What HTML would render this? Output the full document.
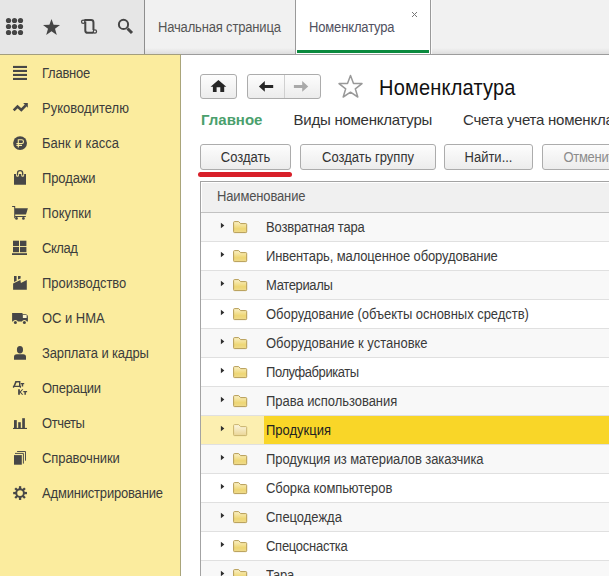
<!DOCTYPE html>
<html><head><meta charset="utf-8">
<style>
*{margin:0;padding:0;box-sizing:border-box}
html,body{width:609px;height:576px;overflow:hidden;background:#fff;font-family:"Liberation Sans",sans-serif;color:#4d4d4d}

.abs{position:absolute}
#top{position:absolute;left:0;top:0;width:609px;height:55px;background:#e6e6e6}
#tabs{position:absolute;left:144px;top:0;width:465px;height:54px;background:linear-gradient(#f1f1f1 0,#f1f1f1 48px,#dedede 54px);border-left:1px solid #8e8e8e}
#topline{position:absolute;left:0;top:54px;width:609px;height:1px;background:#9c9c9c}#topline2{position:absolute;left:0;top:54px;width:181px;height:1px;background:#a39e7e}
.tab{position:absolute;top:0;height:54px;font-size:13px;white-space:nowrap}
#side{position:absolute;left:0;top:55px;width:181px;height:521px;background:#fbec9e;border-right:1px solid #aaa57a}
.si{position:absolute;left:42px;font-size:13px;color:#3c3c3c;white-space:nowrap;letter-spacing:0px;transform:scaleY(1.06);transform-origin:0 12px}
.ic{position:absolute;left:0;top:0}
.bt{display:inline-block;transform:scaleY(1.07);transform-origin:0 17.5px}
.ts{transform:scaleY(1.07);transform-origin:0 12px}
.btn{position:absolute;height:26px;border:1px solid #acacac;border-radius:3px;background:linear-gradient(#fdfdfd,#ececec);font-size:13px;color:#333;text-align:center;line-height:25.4px;white-space:nowrap}
#table{position:absolute;left:200px;top:181px;width:420px;height:400px;border:1px solid #a3a3a3;border-right:none}
.hdr{position:absolute;left:0;top:0;width:100%;height:31px;background:#f0f0f0;border-bottom:1px solid #c2c2c2;box-shadow:inset 1px 1px 0 #fff}
.row{position:absolute;left:0;width:100%;height:29px;border-bottom:1px solid #e0e0e0;font-size:13px;color:#333;white-space:nowrap}
.row .t{position:absolute;left:65px;top:7px;letter-spacing:0px;color:#3a3a3a;transform:scaleY(1.06);transform-origin:0 12px}
.tri{position:absolute;left:19px;top:9px}
.fold{position:absolute;left:31.8px;top:7.7px}
</style></head><body>
<svg width="0" height="0" style="position:absolute"><defs>
<linearGradient id="fg" x1="0" y1="0" x2="0" y2="1"><stop offset="0" stop-color="#fbf1c6"/><stop offset="0.65" stop-color="#eed674"/><stop offset="1" stop-color="#efdb8e"/></linearGradient>
<linearGradient id="fh" x1="0" y1="0" x2="0" y2="1"><stop offset="0" stop-color="#fdf7df"/><stop offset="1" stop-color="#ead596"/></linearGradient>
</defs></svg>
<div id="top"></div>
<div id="tabs">
  <div class="tab" style="left:0;width:151px;"><span class="abs ts" style="left:13px;top:19.9px;color:#555;letter-spacing:-0.17px">Начальная страница</span></div>
  <div class="tab" style="left:150px;width:136px;background:#fff;border-left:1px solid #9a9a9a;border-right:1px solid #9a9a9a"><span class="abs ts" style="left:13px;top:19.9px;color:#505060;letter-spacing:-0.15px">Номенклатура</span>
    <div class="abs" style="left:1px;top:50px;width:132px;height:3px;background:#0a8a3e"></div>
    <svg class="abs" style="left:115px;top:11px" width="7" height="7" viewBox="0 0 7 7"><path d="M1 1L6 6M6 1L1 6" stroke="#777" stroke-width="1"/></svg>
  </div>
</div>
<div id="topline"></div><div id="topline2"></div><div class="abs" style="left:431px;top:0;width:1px;height:54px;background:#fafafa"></div>

<!-- top icons -->
<svg class="abs" style="left:0;top:0" width="144" height="54">
  <g fill="#454545">
    <circle cx="8.5" cy="20.5" r="2.6"/><circle cx="14.5" cy="20.5" r="2.6"/><circle cx="20.5" cy="20.5" r="2.6"/>
    <circle cx="8.5" cy="26.5" r="2.6"/><circle cx="14.5" cy="26.5" r="2.6"/><circle cx="20.5" cy="26.5" r="2.6"/>
    <circle cx="8.5" cy="32.5" r="2.6"/><circle cx="14.5" cy="32.5" r="2.6"/><circle cx="20.5" cy="32.5" r="2.6"/>
    <path d="M51.5 19 L53.6 24.8 L60 24.9 L55 28.7 L56.8 35 L51.5 31.3 L46.2 35 L48 28.7 L43 24.9 L49.4 24.8Z"/>
  </g>
  <g fill="none" stroke="#454545" stroke-width="2">
    <path d="M84.3 20 H91 A2.45 2.45 0 0 1 93.45 22.45 V30"/>
    <path d="M85.3 21.6 V30.4 A2.45 2.45 0 0 0 87.75 32.85 H93.5"/>
    <circle cx="123.5" cy="24.4" r="4.6"/>
    <path d="M127.5 28.5 L132 33" stroke-width="3"/>
  </g>
  <circle cx="83.2" cy="21.7" r="1.65" fill="#eeeeee" stroke="#454545" stroke-width="1.25"/>
  <circle cx="94.9" cy="31.5" r="1.65" fill="#eeeeee" stroke="#454545" stroke-width="1.25"/>
</svg>

<div id="side">
  <div class="si" style="top:11.1px;letter-spacing:-0.250px">Главное</div>
  <div class="si" style="top:46.1px;letter-spacing:0.020px">Руководителю</div>
  <div class="si" style="top:81.1px;letter-spacing:0.050px">Банк и касса</div>
  <div class="si" style="top:116.1px;letter-spacing:-0.117px">Продажи</div>
  <div class="si" style="top:151.1px;letter-spacing:0.060px">Покупки</div>
  <div class="si" style="top:186.1px;letter-spacing:-0.450px">Склад</div>
  <div class="si" style="top:221.1px;letter-spacing:-0.045px">Производство</div>
  <div class="si" style="top:256.1px;letter-spacing:-0.030px">ОС и НМА</div>
  <div class="si" style="top:291.1px;letter-spacing:-0.127px">Зарплата и кадры</div>
  <div class="si" style="top:326.1px;letter-spacing:-0.243px">Операции</div>
  <div class="si" style="top:361.1px;letter-spacing:-0.400px">Отчеты</div>
  <div class="si" style="top:396.1px;letter-spacing:-0.090px">Справочники</div>
  <div class="si" style="top:431.1px;letter-spacing:-0.188px">Администрирование</div>
</div>


<svg class="abs" style="left:0;top:55px" width="40" height="470" viewBox="0 55 40 470">
 <g fill="#474747">
  <rect x="13" y="65.9" width="14" height="2.1"/><rect x="13" y="69.9" width="14" height="2.1"/><rect x="13" y="73.9" width="14" height="2.1"/><rect x="13" y="77.9" width="14" height="2.1"/>
  <path d="M23.2 103 H27.8 V107.7Z"/>
  <circle cx="20.07" cy="143.07" r="6.94"/>
  <path d="M14 174 H26 V184.75 H14Z"/>
  <path d="M12.1 206 H15.2 V208.2 H27.9 L26 214.5 H15.2 V216 H25.8 V216.9 H15.2 V218.3 H14.2 V207 H12.1Z"/>
  <circle cx="16.5" cy="218.4" r="1.35"/><circle cx="23.4" cy="218.4" r="1.35"/>
  <rect x="13" y="240.7" width="6" height="5.4"/><rect x="20" y="240.7" width="6.4" height="5.4"/>
  <rect x="13" y="247" width="6" height="5.2"/><rect x="20" y="247" width="6.4" height="5.2"/>
  <rect x="12" y="253.2" width="15" height="1.8"/>
  <path d="M13.1 289.7 V283.4 L20.4 280.1 L20.9 283.1 L26.8 280 V289.7Z"/>
  <path d="M14 276.1 H16.6 V280.7 L14 281.9Z"/><path d="M18 276.1 H20.6 V278.4 L18 279.6Z"/>
  <path d="M12.1 313 H22.5 V314.3 H25.3 Q27.9 314.3 27.9 317 V321.5 H12.1Z"/>
  <ellipse cx="19.95" cy="349.7" rx="3.05" ry="3.75"/>
  <path d="M14 359.8 V357 Q14 354.3 16.8 354.3 H23.2 Q26 354.3 26 357 V359.8Z"/>
  <rect x="14" y="420.1" width="2.8" height="8.4"/><rect x="18.2" y="422.2" width="2.6" height="6.3"/><rect x="22.2" y="418.2" width="2.7" height="10.3"/>
  <rect x="13" y="427.9" width="14" height="1.1"/>
  <rect x="14" y="455.1" width="7.8" height="9.6"/>
  <path d="M15.2 381.1 H20.4 V385.8 H21 V387.8 H19.8 V387.1 H14.2 V387.8 H12.9 V385.8 H13.5 L15.2 381.5Z M16.6 382.4 L15.1 385.8 H19 V382.4Z"/>
  <path d="M20.7 383 H24.2 V384.3 H23.2 V386.6 H21.7 V384.3 H20.7Z"/>
  <path d="M18.1 389.3 H19.9 V391.4 L22.1 389.3 H23.3 L20.8 391.9 L23.3 394.8 H22 L19.9 392.5 V394.8 H18.1Z"/>
  <path d="M23.3 391 H27.1 V392.3 H25.9 V394.8 H24.4 V392.3 H23.3Z"/>
 </g>
 <path d="M13.7 110.3 L17.5 106.5 L21.3 110 L25.8 105.3" fill="none" stroke="#474747" stroke-width="2.6"/>
 <path d="M18.3 147.6 V139.8 H21.6 A1.9 1.9 0 0 1 21.6 143.6 H16.4 M16.4 145.5 H22" fill="none" stroke="#fbec9e" stroke-width="1.1"/>
 <path d="M17.5 175.4 V173.3 A2.6 2.6 0 0 1 22.7 173.3 V175.4" fill="none" stroke="#fbec9e" stroke-width="2.9" stroke-linecap="round"/>
 <path d="M17.5 174.9 V173.3 A2.6 2.6 0 0 1 22.7 173.3 V174.9" fill="none" stroke="#474747" stroke-width="1.3" stroke-linecap="round"/>
 <rect x="22.85" y="315" width="3.8" height="3" fill="#fbf3c8"/>
 <circle cx="15.4" cy="322.4" r="2.5" fill="#fbec9e"/><circle cx="24.4" cy="322.4" r="2.5" fill="#fbec9e"/>
 <circle cx="15.4" cy="322.4" r="1.5" fill="#474747"/><circle cx="24.4" cy="322.4" r="1.5" fill="#474747"/>
 <path d="M15 453.4 H23.4 V463.6 M17.1 451.5 H25.5 V460.7" fill="none" stroke="#474747" stroke-width="0.95"/>
 <g transform="translate(20.07 493.07)" fill="#474747">
  <circle r="3.85" fill="none" stroke="#474747" stroke-width="2"/>
  <rect x="-1.15" y="-6.9" width="2.3" height="2.8" transform="rotate(0)"/><rect x="-1.15" y="-6.9" width="2.3" height="2.8" transform="rotate(45)"/><rect x="-1.15" y="-6.9" width="2.3" height="2.8" transform="rotate(90)"/><rect x="-1.15" y="-6.9" width="2.3" height="2.8" transform="rotate(135)"/><rect x="-1.15" y="-6.9" width="2.3" height="2.8" transform="rotate(180)"/><rect x="-1.15" y="-6.9" width="2.3" height="2.8" transform="rotate(225)"/><rect x="-1.15" y="-6.9" width="2.3" height="2.8" transform="rotate(270)"/><rect x="-1.15" y="-6.9" width="2.3" height="2.8" transform="rotate(315)"/>
 </g>
</svg>

<!-- content -->
<div class="btn" style="left:200px;top:74px;width:37px;height:25px"></div>
<svg class="abs" style="left:205px;top:76px" width="30" height="22" viewBox="205 76 30 22"><path d="M218.4 79.9 L226.3 86.8 H224.2 V92 H220.3 V87.3 H216.6 V92 H212.9 V86.8 H210.6Z" fill="#262626"/></svg>
<div class="btn" style="left:247px;top:74px;width:74px;height:25px"></div>
<div class="abs" style="left:284px;top:75px;width:1px;height:23px;background:#d0d0d0"></div>
<svg class="abs" style="left:252px;top:76px" width="60" height="22" viewBox="252 76 60 22"><path d="M258.9 86.4 L264.8 80.9 V84.9 H273.2 V88 H264.8 V91.8Z" fill="#262626"/><path d="M308.2 86.4 L302.2 80.9 V84.9 H293.9 V88 H302.2 V91.8Z" fill="#a9a9a9"/></svg>
<svg class="abs" style="left:337px;top:74px" width="27" height="25" viewBox="0 0 27 25"><path d="M13.5 1.5 L16.5 9.5 L25 9.6 L18.3 14.8 L20.8 23 L13.5 18.2 L6.2 23 L8.7 14.8 L2 9.6 L10.5 9.5Z" fill="none" stroke="#999" stroke-width="1.5" stroke-linejoin="round"/></svg>
<div class="abs" style="left:379px;top:76.8px;font-size:20px;color:#111;white-space:nowrap;letter-spacing:0.2px;transform:scaleY(1.07);transform-origin:0 18.43px">Номенклатура</div>

<div class="abs" style="left:201px;top:110.9px;font-size:15px;font-weight:bold;color:#4aa06d;white-space:nowrap">Главное</div>
<div class="abs" style="left:293.5px;top:111.2px;font-size:15px;color:#333;white-space:nowrap;letter-spacing:-0.24px">Виды номенклатуры</div>
<div class="abs" style="left:463px;top:111.2px;font-size:15px;color:#333;white-space:nowrap;letter-spacing:-0.24px">Счета учета номенклатуры</div>

<div class="btn" style="left:200px;top:144px;width:91px"><span class="bt">Создать</span></div>
<div class="abs" style="left:198px;top:172px;width:94px;height:5px;border-radius:3px;background:#d8202a"></div>
<div class="btn" style="left:300px;top:144px;width:136px"><span class="bt">Создать группу</span></div>
<div class="btn" style="left:444px;top:144px;width:89px"><span class="bt">Найти...</span></div>
<div class="btn" style="left:542px;top:144px;width:100px;color:#8c8c8c;text-align:left;padding-left:20.5px;letter-spacing:-0.3px"><span class="bt">Отменить</span></div>

<div id="table">
  <div class="hdr"><span class="abs ts" style="left:16px;top:7.1px;font-size:13px;color:#4f4f4f;letter-spacing:-0.15px">Наименование</span></div>
<div class="row" style="top:31px;background:#f8f8f8"><svg class="tri" width="6" height="8" viewBox="0 0 6 8"><path d="M0.9 0.8 L4.3 3.5 L0.9 6.2Z" fill="#2e2e2e"/></svg><svg class="fold" width="16" height="13" viewBox="0 0 16 13"><path d="M0.6 1.5 Q0.6 0.6 1.5 0.6 H5.6 L7.7 2.6 H12.8 Q13.7 2.6 13.7 3.5 V10.7 Q13.7 11.6 12.8 11.6 H1.5 Q0.6 11.6 0.6 10.7Z" fill="url(#fg)" stroke="#b59c55" stroke-width="1"/></svg><span class="t" style="letter-spacing:-0.186px">Возвратная тара</span></div>
<div class="row" style="top:60px"><svg class="tri" width="6" height="8" viewBox="0 0 6 8"><path d="M0.9 0.8 L4.3 3.5 L0.9 6.2Z" fill="#2e2e2e"/></svg><svg class="fold" width="16" height="13" viewBox="0 0 16 13"><path d="M0.6 1.5 Q0.6 0.6 1.5 0.6 H5.6 L7.7 2.6 H12.8 Q13.7 2.6 13.7 3.5 V10.7 Q13.7 11.6 12.8 11.6 H1.5 Q0.6 11.6 0.6 10.7Z" fill="url(#fg)" stroke="#b59c55" stroke-width="1"/></svg><span class="t" style="letter-spacing:-0.115px">Инвентарь, малоценное оборудование</span></div>
<div class="row" style="top:89px;background:#f8f8f8"><svg class="tri" width="6" height="8" viewBox="0 0 6 8"><path d="M0.9 0.8 L4.3 3.5 L0.9 6.2Z" fill="#2e2e2e"/></svg><svg class="fold" width="16" height="13" viewBox="0 0 16 13"><path d="M0.6 1.5 Q0.6 0.6 1.5 0.6 H5.6 L7.7 2.6 H12.8 Q13.7 2.6 13.7 3.5 V10.7 Q13.7 11.6 12.8 11.6 H1.5 Q0.6 11.6 0.6 10.7Z" fill="url(#fg)" stroke="#b59c55" stroke-width="1"/></svg><span class="t" style="letter-spacing:-0.350px">Материалы</span></div>
<div class="row" style="top:118px"><svg class="tri" width="6" height="8" viewBox="0 0 6 8"><path d="M0.9 0.8 L4.3 3.5 L0.9 6.2Z" fill="#2e2e2e"/></svg><svg class="fold" width="16" height="13" viewBox="0 0 16 13"><path d="M0.6 1.5 Q0.6 0.6 1.5 0.6 H5.6 L7.7 2.6 H12.8 Q13.7 2.6 13.7 3.5 V10.7 Q13.7 11.6 12.8 11.6 H1.5 Q0.6 11.6 0.6 10.7Z" fill="url(#fg)" stroke="#b59c55" stroke-width="1"/></svg><span class="t" style="letter-spacing:-0.039px">Оборудование (объекты основных средств)</span></div>
<div class="row" style="top:147px;background:#f8f8f8"><svg class="tri" width="6" height="8" viewBox="0 0 6 8"><path d="M0.9 0.8 L4.3 3.5 L0.9 6.2Z" fill="#2e2e2e"/></svg><svg class="fold" width="16" height="13" viewBox="0 0 16 13"><path d="M0.6 1.5 Q0.6 0.6 1.5 0.6 H5.6 L7.7 2.6 H12.8 Q13.7 2.6 13.7 3.5 V10.7 Q13.7 11.6 12.8 11.6 H1.5 Q0.6 11.6 0.6 10.7Z" fill="url(#fg)" stroke="#b59c55" stroke-width="1"/></svg><span class="t" style="letter-spacing:0.000px">Оборудование к установке</span></div>
<div class="row" style="top:176px"><svg class="tri" width="6" height="8" viewBox="0 0 6 8"><path d="M0.9 0.8 L4.3 3.5 L0.9 6.2Z" fill="#2e2e2e"/></svg><svg class="fold" width="16" height="13" viewBox="0 0 16 13"><path d="M0.6 1.5 Q0.6 0.6 1.5 0.6 H5.6 L7.7 2.6 H12.8 Q13.7 2.6 13.7 3.5 V10.7 Q13.7 11.6 12.8 11.6 H1.5 Q0.6 11.6 0.6 10.7Z" fill="url(#fg)" stroke="#b59c55" stroke-width="1"/></svg><span class="t" style="letter-spacing:-0.425px">Полуфабрикаты</span></div>
<div class="row" style="top:205px;background:#f8f8f8"><svg class="tri" width="6" height="8" viewBox="0 0 6 8"><path d="M0.9 0.8 L4.3 3.5 L0.9 6.2Z" fill="#2e2e2e"/></svg><svg class="fold" width="16" height="13" viewBox="0 0 16 13"><path d="M0.6 1.5 Q0.6 0.6 1.5 0.6 H5.6 L7.7 2.6 H12.8 Q13.7 2.6 13.7 3.5 V10.7 Q13.7 11.6 12.8 11.6 H1.5 Q0.6 11.6 0.6 10.7Z" fill="url(#fg)" stroke="#b59c55" stroke-width="1"/></svg><span class="t" style="letter-spacing:-0.044px">Права использования</span></div>
<div class="row" style="top:234px;background:#fcefb0"><div class="abs" style="left:63px;top:0;right:0;height:28px;background:#f9d628"></div><svg class="tri" width="6" height="8" viewBox="0 0 6 8"><path d="M0.9 0.8 L4.3 3.5 L0.9 6.2Z" fill="#2e2e2e"/></svg><svg class="fold" width="16" height="13" viewBox="0 0 16 13"><path d="M0.6 1.5 Q0.6 0.6 1.5 0.6 H5.6 L7.7 2.6 H12.8 Q13.7 2.6 13.7 3.5 V10.7 Q13.7 11.6 12.8 11.6 H1.5 Q0.6 11.6 0.6 10.7Z" fill="url(#fh)" stroke="#c9b36e" stroke-width="1"/></svg><span class="t" style="color:#222;letter-spacing:0.000px">Продукция</span></div>
<div class="row" style="top:263px;background:#f8f8f8"><svg class="tri" width="6" height="8" viewBox="0 0 6 8"><path d="M0.9 0.8 L4.3 3.5 L0.9 6.2Z" fill="#2e2e2e"/></svg><svg class="fold" width="16" height="13" viewBox="0 0 16 13"><path d="M0.6 1.5 Q0.6 0.6 1.5 0.6 H5.6 L7.7 2.6 H12.8 Q13.7 2.6 13.7 3.5 V10.7 Q13.7 11.6 12.8 11.6 H1.5 Q0.6 11.6 0.6 10.7Z" fill="url(#fg)" stroke="#b59c55" stroke-width="1"/></svg><span class="t" style="letter-spacing:-0.097px">Продукция из материалов заказчика</span></div>
<div class="row" style="top:292px"><svg class="tri" width="6" height="8" viewBox="0 0 6 8"><path d="M0.9 0.8 L4.3 3.5 L0.9 6.2Z" fill="#2e2e2e"/></svg><svg class="fold" width="16" height="13" viewBox="0 0 16 13"><path d="M0.6 1.5 Q0.6 0.6 1.5 0.6 H5.6 L7.7 2.6 H12.8 Q13.7 2.6 13.7 3.5 V10.7 Q13.7 11.6 12.8 11.6 H1.5 Q0.6 11.6 0.6 10.7Z" fill="url(#fg)" stroke="#b59c55" stroke-width="1"/></svg><span class="t" style="letter-spacing:-0.088px">Сборка компьютеров</span></div>
<div class="row" style="top:321px;background:#f8f8f8"><svg class="tri" width="6" height="8" viewBox="0 0 6 8"><path d="M0.9 0.8 L4.3 3.5 L0.9 6.2Z" fill="#2e2e2e"/></svg><svg class="fold" width="16" height="13" viewBox="0 0 16 13"><path d="M0.6 1.5 Q0.6 0.6 1.5 0.6 H5.6 L7.7 2.6 H12.8 Q13.7 2.6 13.7 3.5 V10.7 Q13.7 11.6 12.8 11.6 H1.5 Q0.6 11.6 0.6 10.7Z" fill="url(#fg)" stroke="#b59c55" stroke-width="1"/></svg><span class="t" style="letter-spacing:-0.022px">Спецодежда</span></div>
<div class="row" style="top:350px"><svg class="tri" width="6" height="8" viewBox="0 0 6 8"><path d="M0.9 0.8 L4.3 3.5 L0.9 6.2Z" fill="#2e2e2e"/></svg><svg class="fold" width="16" height="13" viewBox="0 0 16 13"><path d="M0.6 1.5 Q0.6 0.6 1.5 0.6 H5.6 L7.7 2.6 H12.8 Q13.7 2.6 13.7 3.5 V10.7 Q13.7 11.6 12.8 11.6 H1.5 Q0.6 11.6 0.6 10.7Z" fill="url(#fg)" stroke="#b59c55" stroke-width="1"/></svg><span class="t" style="letter-spacing:-0.273px">Спецоснастка</span></div>
<div class="row" style="top:379px;background:#f8f8f8"><svg class="tri" width="6" height="8" viewBox="0 0 6 8"><path d="M0.9 0.8 L4.3 3.5 L0.9 6.2Z" fill="#2e2e2e"/></svg><svg class="fold" width="16" height="13" viewBox="0 0 16 13"><path d="M0.6 1.5 Q0.6 0.6 1.5 0.6 H5.6 L7.7 2.6 H12.8 Q13.7 2.6 13.7 3.5 V10.7 Q13.7 11.6 12.8 11.6 H1.5 Q0.6 11.6 0.6 10.7Z" fill="url(#fg)" stroke="#b59c55" stroke-width="1"/></svg><span class="t" style="letter-spacing:-0.250px">Тара</span></div>
</div>
</body></html>
